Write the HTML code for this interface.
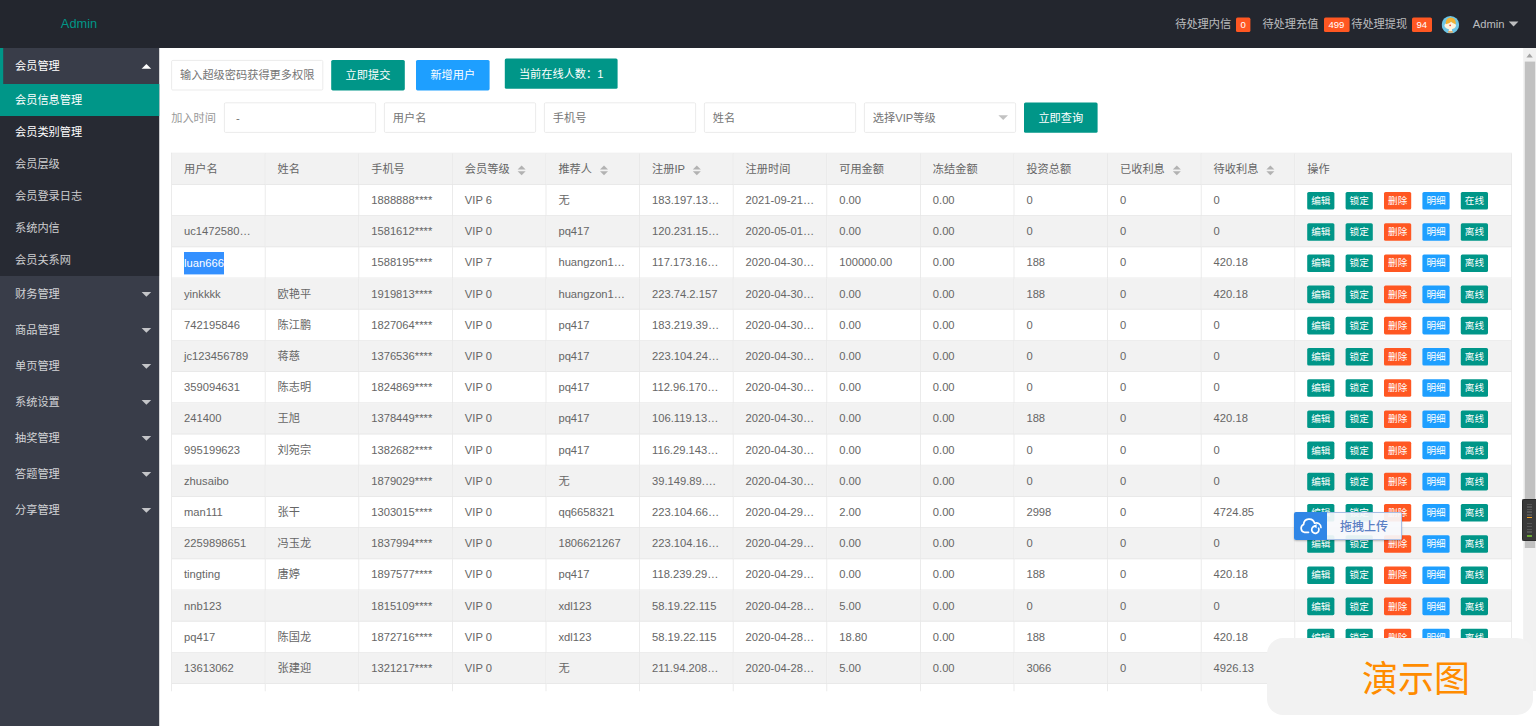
<!DOCTYPE html><html lang="zh-CN"><head><meta charset="utf-8"><title>Admin</title><style>
*{box-sizing:border-box;margin:0;padding:0}
html,body{width:1536px;height:726px;overflow:hidden;background:#fff}
body{font-family:"Liberation Sans","Noto Sans CJK SC",sans-serif;font-size:14px;color:#666;position:relative}
#app{position:absolute;left:0;top:0;width:1923px;height:907.5px;transform:scale(.8);transform-origin:0 0;overflow:hidden;background:#fff}
.header{position:absolute;left:0;top:0;width:1923px;height:60px;background:#23262E}
.logo{position:absolute;left:-1.25px;top:0;width:200px;line-height:60px;text-align:center;color:#009688;font-size:16px}
.hi{position:absolute;top:0;line-height:60px;color:rgba(255,255,255,.7);white-space:nowrap;font-size:14px}
.badge{position:absolute;top:22px;margin-left:.5px;height:18px;line-height:18px;padding:0 6px;font-size:12px;background:#FF5722;color:#fff;border-radius:2px;text-align:center}
.caret{position:absolute;width:0;height:0;border:6px solid transparent;border-top-color:rgba(255,255,255,.7)}
.side{position:absolute;left:-1.25px;top:60px;width:200px;bottom:0;background:#393D49}
.nav a{display:block;height:45px;line-height:45px;padding:0 20px;color:rgba(255,255,255,.78);position:relative;font-size:14px;text-decoration:none}
.nav a.open{color:#fff}
.nav .child{background:rgba(0,0,0,.3)}
.nav .child a{height:40px;line-height:40px;color:rgba(255,255,255,.78)}
.nav .child a.this{background:#009688;color:#fff}
.nav .more{position:absolute;right:10px;top:50%;margin-top:-3px;width:0;height:0;border:6px solid transparent;border-top-color:rgba(255,255,255,.7)}
.nav .open .more{margin-top:-9px;border-top-color:transparent;border-bottom-color:#fff}
.navbar{position:absolute;left:0;top:0;width:5px;height:45px;background:#009688}
.body{position:absolute;left:200px;top:60px;width:1723px;height:804px;overflow:hidden;background:#fff}
.sb{position:absolute;left:1704.25px;top:0;width:20px;height:100%;background:#f1f1f1}
.sb .thumb{position:absolute;left:2px;width:13px;top:17px;height:608px;background:#c1c1c1}
.sb .up{position:absolute;left:4px;top:7px;width:0;height:0;border:4.5px solid transparent;border-top-width:0;border-bottom:5px solid #a3a3a3}
.inp{position:absolute;height:38px;width:190px;border:1px solid #e6e6e6;border-radius:2px;background:#fff;line-height:36px;padding-left:10px;color:#757575;font-size:14px;white-space:nowrap;overflow:hidden}
.btn{position:absolute;height:38px;line-height:38px;padding:0 18px;background:#009688;color:#fff;font-size:14px;border-radius:2px;white-space:nowrap;text-align:center}
.btn.blue{background:#1E9FFF}
.lbl{position:absolute;line-height:38px;color:#999;font-size:14px}
table{position:absolute;left:14px;top:131px;border-collapse:separate;border-spacing:0;table-layout:fixed;border-left:1px solid #e6e6e6;border-top:1px solid #e6e6e6}
th,td{height:39px;border-right:1px solid #e6e6e6;border-bottom:1px solid #e6e6e6;padding:0 15px;text-align:left;font-weight:400;font-size:14px;color:#666;white-space:nowrap;overflow:hidden;line-height:28px}
th{background:#f2f2f2}
tr.even td{background:#f2f2f2}
.sort{display:inline-block;position:relative;width:10px;height:20px;margin-left:10px;vertical-align:middle}
.sort i{position:absolute;left:0;width:0;height:0;border:5px solid transparent}
.sort .a{top:4.5px;border-top-width:0;border-bottom:5px solid #b2b2b2;border-bottom-style:solid}
.sort .d{top:11.5px;border-bottom-width:0;border-top:5px solid #b2b2b2}
.xs{display:inline-block;height:22px;line-height:22px;padding:0 5px;font-size:12px;background:#009688;color:#fff;border-radius:2px;vertical-align:middle;margin-right:14px}
.xs.red{background:#FF5722}.xs.blue{background:#1E9FFF}
.sel{background:#3390ff;color:#fff;display:inline-block;line-height:28px;vertical-align:middle}
.wm{position:absolute;left:1267px;top:638px;width:266px;height:77px;border-radius:16px;background:#f2f2f2}
.wm span{position:absolute;left:95px;top:15.5px;font-size:36px;line-height:52px;color:#ff8c00;white-space:nowrap}
.up1{position:absolute;left:1294px;top:512px;width:108px;height:28px;border-radius:2px;box-shadow:0 1px 2px rgba(0,0,0,.25)}
.up1 .b{position:absolute;left:0;top:0;width:33px;height:28px;background:#3086e6;border-radius:2px 0 0 2px}
.up1 .t{position:absolute;left:33px;top:0;width:75px;height:28px;background:rgba(247,249,252,.92);border:1px solid #a9bfe6;border-left:0;border-radius:0 2px 2px 0;font-size:12px;line-height:28px;color:#5c80c4;text-align:center;font-weight:500}
.dk{position:absolute;left:1522px;top:499px;width:14px;height:42px;background:#3a3a3a;border:1px solid #2a2a2a;border-right:0;border-radius:2px 0 0 2px}
.dk i{position:absolute;left:3.5px;width:5.5px;height:1.5px;background:#555}
</style></head><body>
<div id="app">
<div class="header"><div class="logo">Admin</div>
<span class="hi" style="left:1469px">待处理内信</span><span class="badge" style="left:1544px">0</span>
<span class="hi" style="left:1578px">待处理充值</span><span class="badge" style="left:1654px">499</span>
<span class="hi" style="left:1689px">待处理提现</span><span class="badge" style="left:1764px">94</span>
<svg style="position:absolute;left:1802px;top:20px" width="22" height="22" viewBox="0 0 22 22"><circle cx="11" cy="11" r="11" fill="#6cc5e6"/><rect x="9" y="15" width="4" height="4.500" fill="#fdf3dc"/><ellipse cx="10.800" cy="12" rx="7.200" ry="4.600" fill="#fdf3dc"/><path d="M5.300 10.200C4.800 5.500 7.500 2 11.500 2s6.700 3.500 6.200 8.200c-2.200-.3-4.200-1.400-5.700-3.200-1.600 1.900-4 3-6.700 3.200z" fill="#f2b233"/><circle cx="10.700" cy="11.600" r="1.100" fill="#f0453a"/><rect x="7.800" y="18.600" width="6.400" height="2.200" rx=".8" fill="#e0b070"/></svg>
<span class="hi" style="left:1841px">Admin</span><i class="caret" style="left:1886px;top:27px"></i>
</div>
<div class="side"><div class="nav"><a class="open">会员管理<i class="more"></i></a><div class="navbar"></div><div class="child">
<a class="this">会员信息管理</a>
<a style="color:#fff">会员类别管理</a>
<a>会员层级</a>
<a>会员登录日志</a>
<a>系统内信</a>
<a>会员关系网</a>
</div>
<a>财务管理<i class="more"></i></a>
<a>商品管理<i class="more"></i></a>
<a>单页管理<i class="more"></i></a>
<a>系统设置<i class="more"></i></a>
<a>抽奖管理<i class="more"></i></a>
<a>答题管理<i class="more"></i></a>
<a>分享管理<i class="more"></i></a>
</div></div>
<div class="body">
<div class="inp" style="left:14px;top:15px">输入超级密码获得更多权限</div>
<div class="btn" style="left:214px;top:15px">立即提交</div>
<div class="btn blue" style="left:320px;top:15px">新增用户</div>
<div class="btn" style="left:431px;top:13px;width:141px;padding:0">当前在线人数：1</div>
<div class="lbl" style="left:14px;top:68px">加入时间</div>
<div class="inp" style="left:80px;top:68px">&nbsp;-</div>
<div class="inp" style="left:280px;top:68px">用户名</div>
<div class="inp" style="left:480px;top:68px">手机号</div>
<div class="inp" style="left:680px;top:68px">姓名</div>
<div class="inp" style="left:880px;top:68px">选择VIP等级<i style="position:absolute;right:9px;top:15px;width:0;height:0;border:6px solid transparent;border-top-color:#c2c2c2"></i></div>
<div class="btn" style="left:1080px;top:68px">立即查询</div>
<table><colgroup>
<col style="width:117px">
<col style="width:117px">
<col style="width:117px">
<col style="width:117px">
<col style="width:117px">
<col style="width:117px">
<col style="width:117px">
<col style="width:117px">
<col style="width:117px">
<col style="width:117px">
<col style="width:117px">
<col style="width:117px">
<col style="width:270px"></colgroup><thead><tr>
<th><span>用户名</span></th>
<th><span>姓名</span></th>
<th><span>手机号</span></th>
<th><span>会员等级</span><span class="sort"><i class="a"></i><i class="d"></i></span></th>
<th><span>推荐人</span><span class="sort"><i class="a"></i><i class="d"></i></span></th>
<th><span>注册IP</span><span class="sort"><i class="a"></i><i class="d"></i></span></th>
<th><span>注册时间</span></th>
<th><span>可用金额</span></th>
<th><span>冻结金额</span></th>
<th><span>投资总额</span></th>
<th><span>已收利息</span><span class="sort"><i class="a"></i><i class="d"></i></span></th>
<th><span>待收利息</span><span class="sort"><i class="a"></i><i class="d"></i></span></th>
<th><span>操作</span></th>
</tr></thead><tbody>
<tr>
<td></td>
<td></td>
<td>1888888****</td>
<td>VIP 6</td>
<td>无</td>
<td>183.197.13…</td>
<td>2021-09-21…</td>
<td>0.00</td>
<td>0.00</td>
<td>0</td>
<td>0</td>
<td>0</td>
<td><span class="xs">编辑</span><span class="xs">锁定</span><span class="xs red">删除</span><span class="xs blue">明细</span><span class="xs">在线</span></td>
</tr>
<tr class="even">
<td>uc1472580…</td>
<td></td>
<td>1581612****</td>
<td>VIP 0</td>
<td>pq417</td>
<td>120.231.15…</td>
<td>2020-05-01…</td>
<td>0.00</td>
<td>0.00</td>
<td>0</td>
<td>0</td>
<td>0</td>
<td><span class="xs">编辑</span><span class="xs">锁定</span><span class="xs red">删除</span><span class="xs blue">明细</span><span class="xs">离线</span></td>
</tr>
<tr>
<td><span class="sel">luan666</span></td>
<td></td>
<td>1588195****</td>
<td>VIP 7</td>
<td>huangzon1…</td>
<td>117.173.16…</td>
<td>2020-04-30…</td>
<td>100000.00</td>
<td>0.00</td>
<td>188</td>
<td>0</td>
<td>420.18</td>
<td><span class="xs">编辑</span><span class="xs">锁定</span><span class="xs red">删除</span><span class="xs blue">明细</span><span class="xs">离线</span></td>
</tr>
<tr class="even">
<td>yinkkkk</td>
<td>欧艳平</td>
<td>1919813****</td>
<td>VIP 0</td>
<td>huangzon1…</td>
<td>223.74.2.157</td>
<td>2020-04-30…</td>
<td>0.00</td>
<td>0.00</td>
<td>188</td>
<td>0</td>
<td>420.18</td>
<td><span class="xs">编辑</span><span class="xs">锁定</span><span class="xs red">删除</span><span class="xs blue">明细</span><span class="xs">离线</span></td>
</tr>
<tr>
<td>742195846</td>
<td>陈江鹏</td>
<td>1827064****</td>
<td>VIP 0</td>
<td>pq417</td>
<td>183.219.39…</td>
<td>2020-04-30…</td>
<td>0.00</td>
<td>0.00</td>
<td>0</td>
<td>0</td>
<td>0</td>
<td><span class="xs">编辑</span><span class="xs">锁定</span><span class="xs red">删除</span><span class="xs blue">明细</span><span class="xs">离线</span></td>
</tr>
<tr class="even">
<td>jc123456789</td>
<td>蒋慈</td>
<td>1376536****</td>
<td>VIP 0</td>
<td>pq417</td>
<td>223.104.24…</td>
<td>2020-04-30…</td>
<td>0.00</td>
<td>0.00</td>
<td>0</td>
<td>0</td>
<td>0</td>
<td><span class="xs">编辑</span><span class="xs">锁定</span><span class="xs red">删除</span><span class="xs blue">明细</span><span class="xs">离线</span></td>
</tr>
<tr>
<td>359094631</td>
<td>陈志明</td>
<td>1824869****</td>
<td>VIP 0</td>
<td>pq417</td>
<td>112.96.170…</td>
<td>2020-04-30…</td>
<td>0.00</td>
<td>0.00</td>
<td>0</td>
<td>0</td>
<td>0</td>
<td><span class="xs">编辑</span><span class="xs">锁定</span><span class="xs red">删除</span><span class="xs blue">明细</span><span class="xs">离线</span></td>
</tr>
<tr class="even">
<td>241400</td>
<td>王旭</td>
<td>1378449****</td>
<td>VIP 0</td>
<td>pq417</td>
<td>106.119.13…</td>
<td>2020-04-30…</td>
<td>0.00</td>
<td>0.00</td>
<td>188</td>
<td>0</td>
<td>420.18</td>
<td><span class="xs">编辑</span><span class="xs">锁定</span><span class="xs red">删除</span><span class="xs blue">明细</span><span class="xs">离线</span></td>
</tr>
<tr>
<td>995199623</td>
<td>刘宛宗</td>
<td>1382682****</td>
<td>VIP 0</td>
<td>pq417</td>
<td>116.29.143…</td>
<td>2020-04-30…</td>
<td>0.00</td>
<td>0.00</td>
<td>0</td>
<td>0</td>
<td>0</td>
<td><span class="xs">编辑</span><span class="xs">锁定</span><span class="xs red">删除</span><span class="xs blue">明细</span><span class="xs">离线</span></td>
</tr>
<tr class="even">
<td>zhusaibo</td>
<td></td>
<td>1879029****</td>
<td>VIP 0</td>
<td>无</td>
<td>39.149.89.…</td>
<td>2020-04-30…</td>
<td>0.00</td>
<td>0.00</td>
<td>0</td>
<td>0</td>
<td>0</td>
<td><span class="xs">编辑</span><span class="xs">锁定</span><span class="xs red">删除</span><span class="xs blue">明细</span><span class="xs">离线</span></td>
</tr>
<tr>
<td>man111</td>
<td>张干</td>
<td>1303015****</td>
<td>VIP 0</td>
<td>qq6658321</td>
<td>223.104.66…</td>
<td>2020-04-29…</td>
<td>2.00</td>
<td>0.00</td>
<td>2998</td>
<td>0</td>
<td>4724.85</td>
<td><span class="xs">编辑</span><span class="xs">锁定</span><span class="xs red">删除</span><span class="xs blue">明细</span><span class="xs">离线</span></td>
</tr>
<tr class="even">
<td>2259898651</td>
<td>冯玉龙</td>
<td>1837994****</td>
<td>VIP 0</td>
<td>1806621267</td>
<td>223.104.16…</td>
<td>2020-04-29…</td>
<td>0.00</td>
<td>0.00</td>
<td>0</td>
<td>0</td>
<td>0</td>
<td><span class="xs">编辑</span><span class="xs">锁定</span><span class="xs red">删除</span><span class="xs blue">明细</span><span class="xs">离线</span></td>
</tr>
<tr>
<td>tingting</td>
<td>唐婷</td>
<td>1897577****</td>
<td>VIP 0</td>
<td>pq417</td>
<td>118.239.29…</td>
<td>2020-04-29…</td>
<td>0.00</td>
<td>0.00</td>
<td>188</td>
<td>0</td>
<td>420.18</td>
<td><span class="xs">编辑</span><span class="xs">锁定</span><span class="xs red">删除</span><span class="xs blue">明细</span><span class="xs">离线</span></td>
</tr>
<tr class="even">
<td>nnb123</td>
<td></td>
<td>1815109****</td>
<td>VIP 0</td>
<td>xdl123</td>
<td>58.19.22.115</td>
<td>2020-04-28…</td>
<td>5.00</td>
<td>0.00</td>
<td>0</td>
<td>0</td>
<td>0</td>
<td><span class="xs">编辑</span><span class="xs">锁定</span><span class="xs red">删除</span><span class="xs blue">明细</span><span class="xs">离线</span></td>
</tr>
<tr>
<td>pq417</td>
<td>陈国龙</td>
<td>1872716****</td>
<td>VIP 0</td>
<td>xdl123</td>
<td>58.19.22.115</td>
<td>2020-04-28…</td>
<td>18.80</td>
<td>0.00</td>
<td>188</td>
<td>0</td>
<td>420.18</td>
<td><span class="xs">编辑</span><span class="xs">锁定</span><span class="xs red">删除</span><span class="xs blue">明细</span><span class="xs">离线</span></td>
</tr>
<tr class="even">
<td>13613062</td>
<td>张建迎</td>
<td>1321217****</td>
<td>VIP 0</td>
<td>无</td>
<td>211.94.208…</td>
<td>2020-04-28…</td>
<td>5.00</td>
<td>0.00</td>
<td>3066</td>
<td>0</td>
<td>4926.13</td>
<td><span class="xs">编辑</span><span class="xs">锁定</span><span class="xs red">删除</span><span class="xs blue">明细</span><span class="xs">离线</span></td>
</tr>
<tr>
<td></td>
<td></td>
<td></td>
<td></td>
<td></td>
<td></td>
<td></td>
<td></td>
<td></td>
<td></td>
<td></td>
<td></td>
<td></td>
</tr>
</tbody></table>
<div class="sb"><i class="up"></i><div class="thumb"></div></div>
</div>
</div>
<div class="up1"><div class="b"><svg width="33" height="28" viewBox="0 0 33 28"><path d="M14.500 20.300H10.300a4.200 4.200 0 0 1-.7-7.900a5.600 5.600 0 0 1 11-1.200a4.600 4.600 0 0 1 6.400 4.200" fill="none" stroke="#fff" stroke-width="1.700" stroke-linecap="round" stroke-linejoin="round"/><path d="M24.600 16.200a3.600 3.600 0 1 1-3.800-2.100" fill="none" stroke="#fff" stroke-width="1.700" stroke-linecap="round"/><path d="M19.300 14.300l3.300-2.400v4.400z" fill="#fff"/></svg></div><div class="t">拖拽上传</div></div>
<div class="dk">
<i style="top:3.75px"></i>
<i style="top:6.05px"></i>
<i style="top:8.85px"></i>
<i style="top:11.45px"></i>
<i style="top:14.05px"></i>
<i style="top:16.75px;background:#f0a020"></i>
<i style="top:22.85px"></i>
<i style="top:25.75px"></i>
<i style="top:28.55px"></i>
<i style="top:31.05px"></i>
<i style="top:34.9px;height:2px;background:#6aa832"></i>
</div>
<div class="wm"><span>演示图</span></div>
</body></html>
